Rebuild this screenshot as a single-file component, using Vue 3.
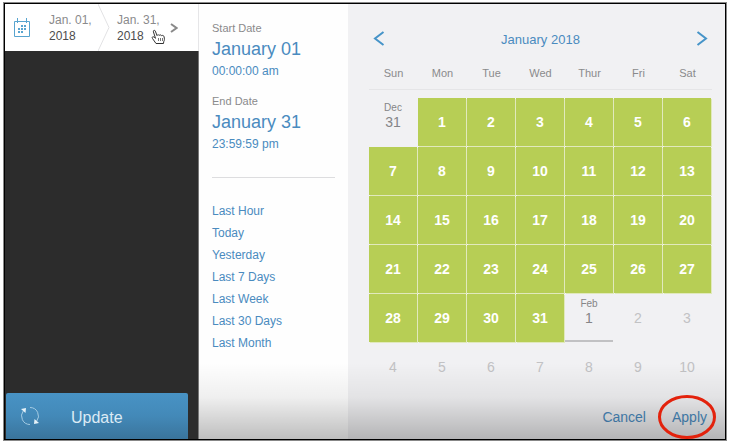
<script setup>
import { ref } from 'vue'

const weekdays = ['Sun', 'Mon', 'Tue', 'Wed', 'Thur', 'Fri', 'Sat']
const presets = ['Last Hour', 'Today', 'Yesterday', 'Last 7 Days', 'Last Week', 'Last 30 Days', 'Last Month']
const range = [
  { label: 'Start Date', day: 'January 01', time: '00:00:00 am' },
  { label: 'End Date', day: 'January 31', time: '23:59:59 pm' },
]
const start = ref(1)
const end = ref(31)

const cells = [{ n: 31, month: 'Dec', kind: 'edge' }]
for (let n = 1; n <= 31; n++) cells.push({ n, kind: n >= start.value && n <= end.value ? 'selected' : 'plain' })
cells.push({ n: 1, month: 'Feb', kind: 'edge today' })
for (let n = 2; n <= 10; n++) cells.push({ n, kind: 'plain' })
const weeks = []
for (let i = 0; i < cells.length; i += 7) weeks.push(cells.slice(i, i + 7))
</script>

<template>
  <div class="page">
    <main class="frame">
      <aside class="side">
        <header class="range">
          <svg class="cal" width="18" height="20" viewBox="0 0 18 20" aria-hidden="true">
            <path d="M1.5 3.5h15v15h-15zM4.5 0v5M13.5 0v5" />
            <path class="dots" d="M8 8h2M11 8h2M5 11h2M8 11h2M11 11h2M5 14h2M8 14h2" />
          </svg>
          <button class="date">Jan. 01,<b>2018</b></button>
          <svg class="divider" width="12" height="47" viewBox="0 0 12 47" aria-hidden="true"><path d="M0 0L11 23.5L0 47" /></svg>
          <button class="date">Jan. 31,<b>2018</b></button>
          <svg class="more" width="8" height="12" viewBox="0 0 8 12" aria-hidden="true"><path d="M1 2L6.500 6L1 10" /></svg>
          <svg class="hand" width="15" height="16" viewBox="0 0 15 16" aria-hidden="true">
            <path d="M5 14.500L1.500 9.500C.5 8 2 7.200 3.200 8.200L4.500 9.300L2.400 2.800C2 1.200 3.700.6 4.300 2.100L6 6.500C6.500 5.500 7.800 5.600 8.200 6.400C8.900 5.500 10.200 5.800 10.500 6.700C11.500 6 12.800 6.500 13 7.600C13.600 9.800 13.600 11.200 12.700 12.800L12.500 14.500Z" />
            <path class="thin" d="M7.500 9v3M9.500 9v3M11.500 9v3" />
          </svg>
        </header>
        <button class="update">
          <svg width="20" height="20" viewBox="0 0 20 20" aria-hidden="true">
            <path d="M10 1.500A8.500 8.500 0 0 1 16.700 15.200M10 18.500A8.500 8.500 0 0 1 3.300 4.800" />
            <path class="tip" d="M1 3L6 2L5.500 7ZM19 17L14 18L14.500 13Z" />
          </svg>
          <span>Update</span>
        </button>
      </aside>

      <div class="picker">
        <section class="summary">
          <div v-for="r in range" :key="r.label" class="block">
            <div class="label">{{ r.label }}</div>
            <div class="day">{{ r.day }}</div>
            <div class="time">{{ r.time }}</div>
          </div>
          <hr />
          <ul>
            <li v-for="p in presets" :key="p"><button>{{ p }}</button></li>
          </ul>
        </section>

        <section class="calendar">
          <div class="nav">
            <button aria-label="Previous month">
              <svg width="12" height="16" viewBox="0 0 12 16"><path d="M10.500 1L2 7.500L10.500 14" /></svg>
            </button>
            <h2>January 2018</h2>
            <button aria-label="Next month">
              <svg width="12" height="16" viewBox="0 0 12 16"><path d="M1.500 1L10 7.500L1.500 14" /></svg>
            </button>
          </div>
          <table>
            <thead>
              <tr><th v-for="d in weekdays" :key="d" scope="col"><div>{{ d }}</div></th></tr>
            </thead>
            <tbody>
              <tr v-for="(w, i) in weeks" :key="i">
                <td v-for="(c, j) in w" :key="j">
                  <button :class="c.kind"><small v-if="c.month">{{ c.month }}</small>{{ c.n }}</button>
                </td>
              </tr>
            </tbody>
          </table>
          <footer>
            <button>Cancel</button>
            <button class="apply">Apply
              <svg width="60" height="46" viewBox="0 0 60 46" aria-hidden="true"><ellipse cx="30" cy="23" rx="27.5" ry="20.500" /></svg>
            </button>
          </footer>
        </section>
      </div>
    </main>
  </div>
</template>

<style>
body { background: #fff; }
</style>

<style scoped>
* { box-sizing: border-box; }
button { margin: 0; padding: 0; border: 0; background: none; font: inherit; color: inherit; cursor: pointer; }
svg { display: block; fill: none; flex: none; }

.page {
  display: flex;
  min-height: 100vh;
  padding: 3px 6px 5px 4px;
  font-family: "Liberation Sans", Arial, sans-serif;
  font-size: 12px;
  color: #8a8a8c;
}
.frame { flex: 1; display: flex; border: 1px solid #000; box-shadow: 0 0 0 1px #888; }

.side { flex: none; width: 194px; display: flex; flex-direction: column; background: linear-gradient(90deg, #2c2c2c calc(100% - 1px), #777 0); }
.range { position: relative; display: flex; align-items: center; height: 47px; padding-left: 8px; background: #fff; border-right: 1px solid #e6e6e8; }
.cal { stroke: #58a4cf; margin-right: 18px; }
.cal .dots { stroke-width: 2; }
.date { width: 49px; text-align: left; line-height: 16px; }
.date b { display: block; font-weight: normal; color: #4c4c4e; }
.divider { stroke: #e2e2e4; margin-right: 7px; }
.more { stroke: #8a8a8a; stroke-width: 2; margin: 0 0 0 4px; }
.hand { position: absolute; left: 146px; top: 25px; fill: #fff; stroke: #333; }
.hand .thin { stroke: #777; }
.update {
  display: flex; align-items: center; gap: 31px; height: 46px;
  margin: auto 11px 0 1px; padding-left: 14px;
  border-radius: 2px 2px 0 0;
  background: linear-gradient(#4893c5, #4389b8 50%, #3a749c);
  color: #dcebf5; font-size: 16px;
}
.update svg { stroke: #a5cce4; stroke-width: 1; }
.update .tip { fill: #e6f2f8; stroke: none; }
.update span { padding-top: 3px; }

.picker { position: relative; flex: 1; display: flex; background: #f1f1f3; }
.picker::after {
  content: ""; position: absolute; inset: auto 0 0 0; height: 76px; pointer-events: none;
  background: linear-gradient(rgba(0, 0, 0, 0), rgba(0, 0, 0, .06) 45%, rgba(0, 0, 0, .25));
}
.summary { flex: none; width: 149px; padding: 15px 13px 0; background: #fefefe; color: #4a8bbf; }
.block { margin-bottom: 11px; }
.label { font-size: 11px; line-height: 18px; color: #8a8a8c; }
.day { font-size: 18px; line-height: 24px; white-space: nowrap; }
.time { line-height: 20px; }
hr { margin: 23px 0 22px; border: 0; border-top: 1px solid #dddddf; }
ul { margin: 0; padding: 0; list-style: none; }
li { line-height: 22px; }
li button { display: block; }

.calendar { flex: 1; display: flex; flex-direction: column; padding: 19px 13px 0 21px; }
.nav { display: flex; justify-content: space-between; align-items: center; height: 32px; padding: 0 4px; color: #4a8bbf; }
.nav svg { stroke: #4694c8; stroke-width: 2; }
.nav h2 { margin: 0; font-size: 13px; font-weight: normal; }
table { width: 100%; table-layout: fixed; border-collapse: collapse; }
th { padding: 0 0 8px; font-size: 11px; font-weight: normal; }
th div { height: 35px; line-height: 36px; border-bottom: 1px solid #e5e5e7; }
td { padding: 0 1px 1px 0; height: 49px; }
td button {
  display: flex; flex-direction: column; align-items: center; justify-content: center;
  width: 100%; height: 48px; font-size: 14px; line-height: 16px;
}
.selected { background: #b7ce55; box-shadow: 1px 1px 0 #e1e9bc; color: #fff; font-weight: bold; }
.plain { color: #c2c2c4; }
.edge { justify-content: flex-start; padding-top: 4px; color: #858587; }
.edge small { font-size: 10px; line-height: 12px; }
.today { border-bottom: 2px solid #c1c1c3; }
footer { display: flex; justify-content: flex-end; align-items: center; gap: 26px; flex: 1; padding: 2px 5px 0 0; font-size: 14px; color: #4a8bbf; }
.apply { position: relative; }
.apply svg { position: absolute; left: -15px; top: -15px; z-index: 1; stroke: #e3220c; stroke-width: 3; }
</style>
